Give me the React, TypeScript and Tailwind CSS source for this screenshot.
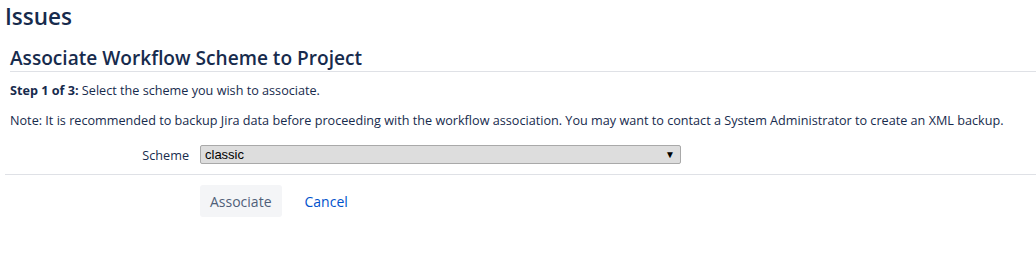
export default function App() {
  return (
    <div className="min-h-[266px] bg-white text-[#172b4d] font-['Open_Sans',sans-serif]">
      <h1 className="px-[5px] pt-[2px] text-[22.5px] leading-[30px] font-semibold">Issues</h1>
      <div className="pl-[10px] pt-[14px]">
        <h2 className="border-b border-[#dfe1e6] pb-[1px] text-[19.1px] leading-[24px] font-semibold">
          Associate Workflow Scheme to Project
        </h2>
        <p className="mt-[10px] text-[12.65px] leading-[16px]">
          <b>Step 1 of 3:</b> Select the scheme you wish to associate.
        </p>
        <p className="mt-[14px] text-[12.65px] leading-[16px]">
          Note: It is recommended to backup Jira data before proceeding with the workflow association. You may want to
          contact a System Administrator to create an XML backup.
        </p>
      </div>
      <div className="ml-[5px] border-b border-[#dfe1e6] pt-[17px] pb-[10px]">
        <div className="flex items-center">
          <label className="w-[195px] pr-[11px] text-right text-[12.65px] leading-[18px]">Scheme</label>
          <div className="flex h-[19px] w-[481px] items-center justify-between rounded-[2px] border border-[#a9a9a9] bg-[#dddddd] pl-[4px] pr-[5px] font-['Liberation_Sans',sans-serif] text-[13px] text-black">
            <span>classic</span>
            <span className="text-[10px]">▼</span>
          </div>
        </div>
      </div>
      <div className="flex items-center gap-[10px] pl-[200px] pt-[10px]">
        <button className="h-[32px] rounded-[3px] bg-[#f4f5f7] px-[10px] text-[14px] text-[#505f79]">Associate</button>
        <a className="px-[13px] text-[14px] text-[#0052cc]">Cancel</a>
      </div>
    </div>
  );
}
